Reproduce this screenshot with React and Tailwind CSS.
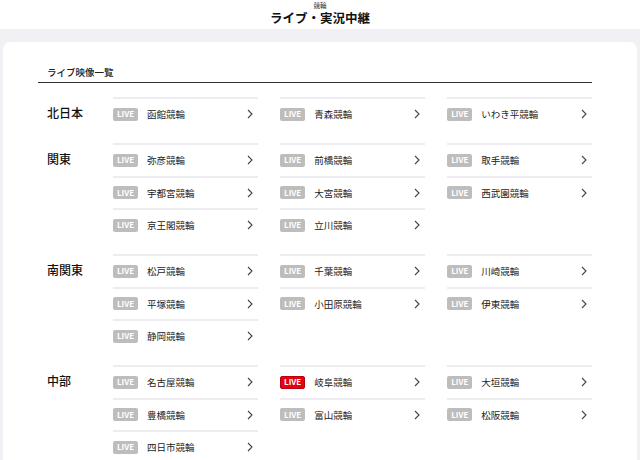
const REGIONS = [
  { name: '北日本', tracks: ['函館競輪', '青森競輪', 'いわき平競輪'] },
  { name: '関東', tracks: ['弥彦競輪', '前橋競輪', '取手競輪', '宇都宮競輪', '大宮競輪', '西武園競輪', '京王閣競輪', '立川競輪'] },
  { name: '南関東', tracks: ['松戸競輪', '千葉競輪', '川崎競輪', '平塚競輪', '小田原競輪', '伊東競輪', '静岡競輪'] },
  { name: '中部', tracks: ['名古屋競輪', '岐阜競輪', '大垣競輪', '豊橋競輪', '富山競輪', '松阪競輪', '四日市競輪'] },
]

const ON_AIR = ['岐阜競輪']

function Chevron() {
  return (
    <svg width="6" height="10" viewBox="0 0 6 10" fill="none" className="shrink-0">
      <path d="M1 1l4 4-4 4" stroke="#444" strokeWidth="1.1" />
    </svg>
  )
}

function TrackRow({ name }) {
  const live = ON_AIR.includes(name)
  return (
    <div className="h-[32.5px] border-t-2 border-[#ececf1] flex items-center pr-[5px]">
      <span
        className={`w-[25px] h-[13px] rounded-[2px] flex items-center justify-center text-[8px] font-bold leading-none text-white ${
          live ? 'bg-[#e60012] border border-[#b8000e]' : 'bg-[#bdbdbd]'
        }`}
      >
        LIVE
      </span>
      <span className="ml-[9px] flex-1 text-[9.5px] text-[#222]">{name}</span>
      <Chevron />
    </div>
  )
}

export default function App() {
  return (
    <div className="w-[640px] h-[460px] overflow-hidden bg-[#f1f1f5] font-['Noto_Sans_CJK_JP','Noto_Sans',sans-serif]">
      {/* ===== HEADER ===== */}
      <div className="h-[29px] bg-white flex flex-col items-center">
        <div className="text-[6.5px] leading-[7px] mt-[2px] text-[#333]">競輪</div>
        <div className="text-[12.5px] leading-[14px] mt-[2px] font-bold text-[#111]">ライブ・実況中継</div>
      </div>

      {/* ===== CARD ===== */}
      <div className="mt-[13px] mx-[3px] bg-white rounded-[8px] pt-[23px] pl-[35px] pr-[45px] pb-[20px]">
        <div className="border-b border-[#333] pl-[9px] pb-[3px] text-[9.5px] font-medium text-[#222] leading-[14px]">
          ライブ映像一覧
        </div>

        <div className="mt-[14px] flex flex-col">
          {REGIONS.map(r => (
            <div key={r.name} className="flex mb-[13.5px]">
              <div className="w-[75px] pl-[9px] h-[32.5px] flex items-center text-[12px] font-medium text-[#111]">
                {r.name}
              </div>
              <div className="flex-1 grid grid-cols-3 gap-x-[22.5px]">
                {r.tracks.map(t => (
                  <TrackRow key={t} name={t} />
                ))}
              </div>
            </div>
          ))}
        </div>
      </div>
    </div>
  )
}
